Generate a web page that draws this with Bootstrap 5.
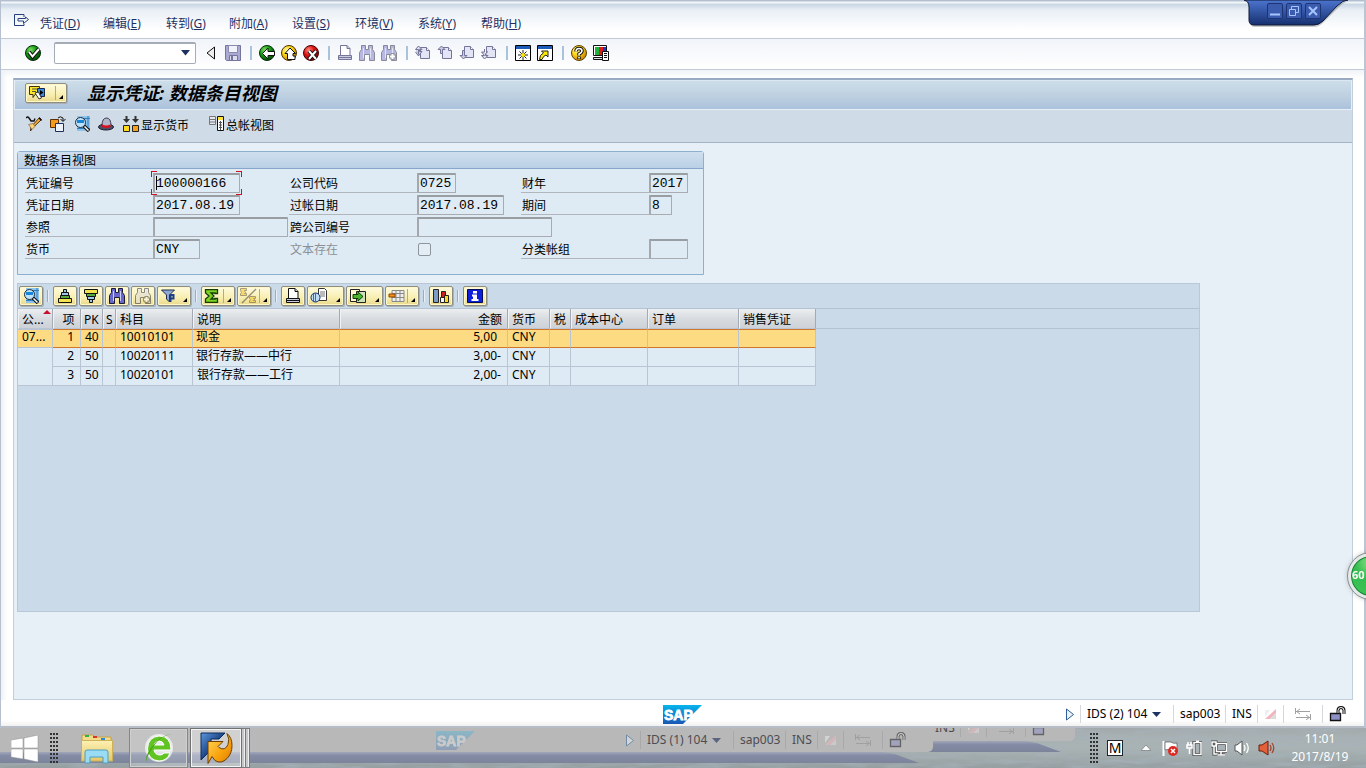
<!DOCTYPE html>
<html lang="zh-CN">
<head>
<meta charset="utf-8">
<meta name="viewport" content="width=device-width, initial-scale=1">
<title>显示凭证: 数据条目视图</title>
<link href="https://cdn.jsdelivr.net/npm/bootstrap@5.3.0/dist/css/bootstrap.min.css" rel="stylesheet">
<style>
  body{font-family:"Noto Sans","Noto Sans CJK SC",sans-serif;font-size:12px;line-height:16px;color:#000;background:#fff;min-height:100vh}
  svg{display:block;flex:none}
  button{font:inherit;color:inherit;border:0;background:none;padding:0}
  .sapwin{border-left:1px solid #b6c0ce;border-right:2px solid #bcc6d3;background:linear-gradient(90deg,#eef1f6,#fff 6px)}
  .menus{height:39px;padding:15px 0 0 12px;background:linear-gradient(#b4c0d2 0 1px,#f4f7fa 2px 3px,#c8d5e4 4px,#e9eff5 10px,#fff 30px);border-bottom:1px solid #c3cad6;color:#1d3263}
  .menus button{width:63px;height:17px;text-align:left}
  .menus .sysmenu{width:27px;margin-top:-3px}
  .stdbar{height:31px;padding:0 0 3px 21px;background:linear-gradient(#f1f4f9,#fff);border-bottom:1px solid #c3cad6}
  .ib{width:22px;height:22px;padding:3px}
  .vsep{width:12px;height:14px;background:linear-gradient(#a9c3dc,#a9c3dc) 6px 0/2px 14px no-repeat}
  .combo{width:142px;height:22px;margin-left:10px;border:1px solid #a5acb5;border-top-width:2px;border-radius:2px;background:#fff;position:relative}
  .combo input{border:0;outline:0;width:100%;height:100%;background:none;padding:0 20px 0 4px}
  .combo button{position:absolute;right:4px;top:6px}
  .gutter{padding:8px 11px 0 12px;background:linear-gradient(#eff2f7,#fff0 8px)}
  .frame{border:1px solid #c3cedb;border-top:2px solid #98abc3;background:#e8f0f7}
  .titlebar{height:30px;padding:0 10px 4px;border:1px solid #e6eff6;border-top-color:#dbe8f1;background:linear-gradient(#cddeea,#bfd1e1 50%,#abc2dc)}
  .titlebar h1{font-size:18px;line-height:24px;font-weight:700;font-style:italic;margin:0 0 0 20px}
  .ylw{border:1px solid #8c8d84;border-radius:2px;background:linear-gradient(#fffbdf,#f8eeb0 60%,#e9d98b);box-shadow:inset 0 0 0 1px #fff7c8,1px 1px 0 #a9b0b2}
  .apptools{height:33px;padding:0 0 4px 8px;border-bottom:1px solid #a3b6c8;background:#cfdce7}
  .apptools .ib{width:24px;padding:3px 4px}
  .workarea{padding:8px 2px 0 3px}
  .grpbox{width:687px;max-width:100%;border:1px solid #8fb0cc;border-radius:3px 3px 0 0;background:#dfebf4}
  .grpbox legend{float:left;width:100%;font-size:12px;line-height:17px;height:17px;padding-left:6px;margin:0;border-bottom:1px solid #88a5cc;background:linear-gradient(#cfdfef,#bad0e6)}
  .fgrid{clear:both;display:grid;grid-template-columns:128px 136px 128px 104px 128px 1fr;row-gap:2px;padding:4px 0 14px 7px}
  .fgrid label{border-bottom:1px solid #b0b6bc;padding:3px 0 0 1px;height:20px}
  .fgrid .dim{color:#8a9097;border:0}
  .fgrid input[type=text]{width:100%;height:20px;border:1px solid #a8acb0;border-top:2px solid #999ea3;border-left:2px solid #a4a8ac;border-radius:1px;background:#dfebf4;font:13px/15px "Liberation Mono",monospace;padding:0 0 0 1px;outline:0;display:block}
  .chk{appearance:none;width:13px;height:13px;border:1px solid #8e959b;border-radius:2px;background:#e2edf5;margin:4px 0 0 1px}
  .w23{width:23px}.w39{width:39px}.w47{width:47px}.w87{width:87px}.w135{width:135px}
  .focusbox{position:relative}
  .focusbox::after{content:"";position:absolute;inset:-2px;pointer-events:none;
    background:linear-gradient(#d41020,#d41020) 0 0/6px 1px,linear-gradient(#d41020,#d41020) 0 0/1px 6px,linear-gradient(#d41020,#d41020) 100% 0/6px 1px,linear-gradient(#d41020,#d41020) 100% 0/1px 6px,linear-gradient(#d41020,#d41020) 0 100%/6px 1px,linear-gradient(#d41020,#d41020) 0 100%/1px 6px,linear-gradient(#d41020,#d41020) 100% 100%/6px 1px,linear-gradient(#d41020,#d41020) 100% 100%/1px 6px;background-repeat:no-repeat}
  .caret{position:absolute;left:3px;top:3px;width:1px;height:14px;background:#000}
  .alv{margin:8px 150px 87px 0;border:1px solid #b9c8d9;background:#cbdae8}
  .alvtools{height:25px;padding:2px 0 3px 1px;gap:2px;border-bottom:1px solid #b4c3d3}
  .alvtools .ylw{width:24px;height:20px;display:flex;align-items:center;justify-content:center}
  .alvtools .drop{width:34px;justify-content:flex-start;padding-left:2px;gap:2px;position:relative}
  .alvtools .wide{width:37px}
  .drop::after{content:"";position:absolute;right:3px;bottom:3px;border:2px solid #000;border-top-color:transparent;border-left-color:transparent}
  .split::before{content:"";position:absolute;right:10px;top:2px;bottom:2px;width:1px;background:#b9ad74}
  .alvtools i{width:6px;height:12px;background:linear-gradient(90deg,#9eabba 1px,#e8eff6 1px) 2px 0/2px 12px no-repeat}
  .off{opacity:.5}
  .alvtable{border-collapse:separate;border-spacing:0;table-layout:fixed;width:798px;flex:none;line-height:15px}
  .alvtable th,.alvtable td{height:19px;padding:0 5px 3px 4px;border-right:1px solid #b9c5d3;border-bottom:1px solid #b9c5d3;overflow:hidden;white-space:nowrap;font-weight:400;background:#deebf4}
  .alvtable th{height:20px;background:linear-gradient(#eceeef,#d8dce1 50%,#cdd2d8);border-right-color:#a3aab3;border-left:1px solid #f0f2f4;position:relative;padding:3px 5px 1px 3px}
  .alvtable td:nth-child(-n+3){padding-left:4px;padding-right:3px}
  .alvtable td:nth-child(6){padding-left:3px}
  .alvtable th:nth-child(-n+4){padding-right:0}
  .alvtable .num{padding-right:6px!important;text-align:right}
  .alvtable .hot td{background:#fcdb82;border-top:1px solid #d2762c;border-bottom-color:#d2762c;line-height:14px}
  .alvtable .hot td:first-child{border-color:#b9c5d3}
  .sorted::after{content:"";position:absolute;right:1px;top:1px;border:4px solid transparent;border-top:0;border-bottom:4px solid #c8102e}
  .headrest{height:20px;border-bottom:1px solid #b4c3d3}
  .sbar{display:grid;grid-template-columns:1fr auto 1fr;align-items:center;height:28px}
  .cells{display:flex;justify-content:flex-end;align-items:center}
  .cells>*{flex:none;height:18px;display:flex;align-items:center;border-left:1px solid #d5d9de;padding-left:6px}
  .cells .c-go{width:15px;border:0;padding:0}
  .cells .c-sys{width:93px;gap:5px}
  .cells .c-host{width:52px}.cells .c-ins{width:32px}.cells .c-er{width:26px}
  .cells .c-tab{width:39px;padding-left:11px}.cells .c-lock{width:24px}
  .foot{padding:2px 18px 0;border-bottom:2px solid #b6bdc6;background:linear-gradient(#fff 20px,#f1f1f1)}
  .logo text{font:700 14px "Liberation Sans",sans-serif;fill:#fff;stroke:#fff;stroke-width:.8px}
  .taskbar{height:40px;position:relative;overflow:hidden;background:linear-gradient(#a3a9ab,#a8b1b3 25%,#aab3b3 50%,#959fa2)}
  .water{position:absolute;inset:0;width:100%;height:100%}
  .ghostwin{position:absolute;overflow:hidden}
  .ghostwin .pane{background:#b8b8b8;color:#4c4c52;border-bottom-right-radius:5px}
  .ghostwin .cells>*{border-color:#a9a9ab}
  .ghostwin .logo{opacity:.25}
  .ghostwin .edge{height:11px;background:linear-gradient(#a2a7b9,#858da6 30%,#7c849b);clip-path:polygon(0 0,calc(100% - 50px) 0,calc(100% - 38px) 2px,calc(100% - 14px) 11px,0 11px)}
  .g1{left:-23px;top:0;width:956px}
  .g1 .pane{height:24px;padding:0 27px}
  .g2{left:918px;top:-11px;width:157px}
  .g2 .pane{height:24px}
  .g2 .cells{padding:2px 26px 0 0}
  .tbitem{position:relative;height:40px;display:flex;align-items:center;justify-content:center}
  .tbwin{border:1px solid #868686;box-shadow:inset 0 0 0 1px #cfcfcf;background:#ffffff2e}
  .tbon{border:1px solid #6f7173;box-shadow:inset 0 0 0 1px #f4f4f4;background:#ffffff59}
  .stack{width:4px;height:40px;border:1px solid #77797b;border-left:0;box-shadow:inset -1px 0 0 #eee;background:#c4c6c8}
  .grip{width:8px;height:30px;background:radial-gradient(circle at 1px 1px,#333 1px,transparent 1px) 0 0/3px 4px}
  .ball{position:fixed;right:-28px;top:553px;width:46px;height:46px;border-radius:50%;border:3px solid #e5e9e8;outline:1px solid #8a9391;background:radial-gradient(circle at 50% 15%,#8fe08a,#35bd4f 40%,#3fc458);box-shadow:0 0 5px #5558,inset 0 0 0 1px #17823a;color:#fff;font-weight:700;font-size:11px;line-height:38px;padding-left:1px;z-index:5}
  .wintab{position:absolute;right:16px;top:0;width:104px;height:30px}
  .wintab>svg{position:absolute;inset:0}
  .wintab div{position:relative;display:flex;gap:3px;padding:3px 0 0 23px}
  .wintab button{width:16px;height:16px;border-radius:2px;border:1px solid #1c3474;background:#3b5cae}
  .clock{color:#fff;text-align:center;line-height:18px;width:66px}
</style>
</head>
<body class="d-flex flex-column">

<svg width="0" height="0" class="position-absolute" aria-hidden="true">
  <defs>
    <radialGradient id="gG" cx=".35" cy=".3" r=".7"><stop offset="0" stop-color="#7fdc60"/><stop offset=".5" stop-color="#159c16"/><stop offset="1" stop-color="#064d08"/></radialGradient>
    <radialGradient id="gY" cx=".35" cy=".3" r=".7"><stop offset="0" stop-color="#fff79a"/><stop offset=".5" stop-color="#fbd211"/><stop offset="1" stop-color="#c98500"/></radialGradient>
    <radialGradient id="gR" cx=".35" cy=".3" r=".7"><stop offset="0" stop-color="#ff8a7a"/><stop offset=".5" stop-color="#e01212"/><stop offset="1" stop-color="#7c0505"/></radialGradient>
    <linearGradient id="gS" x2="0" y2="1"><stop offset="0" stop-color="#05b5ee"/><stop offset="1" stop-color="#1b56b4"/></linearGradient>
    <linearGradient id="gTab" x2="0" y2="1"><stop offset="0" stop-color="#4c74cf"/><stop offset="1" stop-color="#16306f"/></linearGradient>
    <linearGradient id="gB" x2="1" y2="1"><stop offset="0" stop-color="#5d97dc"/><stop offset=".6" stop-color="#0f3577"/></linearGradient>
    <linearGradient id="gO" x2="1" y2="1"><stop offset="0" stop-color="#ffd95c"/><stop offset=".6" stop-color="#f8a10c"/><stop offset="1" stop-color="#d97a00"/></linearGradient>
    <linearGradient id="gF" x2="0" y2="1"><stop offset="0" stop-color="#fdf1b4"/><stop offset="1" stop-color="#e6c765"/></linearGradient>
  </defs>
  <symbol id="i-bino" viewBox="0 0 16 16"><path d="M2.500.500h4v4h3v-4h4v4l2 3v8h-5v-6h-5v6h-5v-8l2-3z" fill="currentColor" stroke="#1b1c30"/><path d="M4.500 3v10M11.500 3v10" stroke="#c9cdf3"/></symbol>
  <symbol id="i-print" viewBox="0 0 16 16"><path d="M3.500.500h6.500l3 3v7H3.500z" fill="#fff" stroke="currentColor"/><path d="M10 .500v3h3M1.500 10.500h13v4h-13z" fill="#c9cbe0" stroke="currentColor"/><path d="M2 12.500h12" stroke="currentColor"/></symbol>
  <symbol id="i-lens" viewBox="0 0 16 16"><path d="M3 0h13v15H3z" fill="#8fc3ea"/><path d="M3 2.500h13M3 12.500h13M14 0v15" stroke="#2f7fc0"/><circle cx="6.500" cy="6.500" r="5" fill="#bfe2fa" stroke="#1d2a3a"/><path d="M3 5.500h7" stroke="#1686d8" stroke-width="3"/><path d="M10 10l5 5" stroke="#111" stroke-width="3.500"/><path d="M10.500 10.500l4 4" stroke="#fff" stroke-width="1.500"/></symbol>
  <symbol id="i-page" viewBox="0 0 16 16"><path d="M5.500 3.500h6l3 3v8h-9z" fill="#e4e4f7" stroke="#75759a"/><path d="M11.500 3.500v3h3" fill="#fff" stroke="#75759a"/></symbol>
  <symbol id="i-play" viewBox="0 0 10 13"><path d="M1.500 1l7 5.500-7 5.500z" fill="#eaf3fa" stroke="#2c5f96"/></symbol>
  <symbol id="i-erase" viewBox="0 0 13 12"><path d="M1 2h5L1 9z" fill="#eee"/><path d="M1 11l11-10v4L6 11z" fill="#f0b6bd"/><path d="M6 11l6-6v6z" fill="#dcdcdc"/></symbol>
  <symbol id="i-tabs" viewBox="0 0 16 12"><path d="M.5 0v6M1 3.500h14M5 1L1.500 3.500 5 6M15.500 6v6M1 9.500h14M11 7l3.500 2.500L11 12" fill="none" stroke="#a0a0a0"/></symbol>
  <symbol id="i-lock" viewBox="0 0 17 16"><path d="M1.500 7.500h10v7h-10z" fill="#8c90c4" stroke="#111" stroke-width="1.300"/><path d="M9 7V4.500q0-3 3-3t3 3V8" fill="none" stroke="#111" stroke-width="3"/><path d="M9 7V4.500q0-3 3-3t3 3V8" fill="none" stroke="#fff"/></symbol>
</svg>

<div class="sapwin d-flex flex-column flex-grow-1 position-relative">
  <nav class="menus d-flex">
    <button class="sysmenu" aria-label="菜单"><svg width="17" height="13" viewBox="0 0 17 13"><path d="M11 3V.500H1.500v11H11V10M5 4.500h7.500v-1.500l3 2.500-5 4V7H5z" fill="none" stroke="#26407c"/></svg></button>
    <button>凭证(<u>D</u>)</button><button>编辑(<u>E</u>)</button><button>转到(<u>G</u>)</button><button>附加(<u>A</u>)</button><button>设置(<u>S</u>)</button><button>环境(<u>V</u>)</button><button>系统(<u>Y</u>)</button><button>帮助(<u>H</u>)</button>
  </nav>
  <div class="wintab">
    <svg width="104" height="30" viewBox="0 0 104 30"><path d="M0 1q6 1 6 8v13q0 5 5 5h59q5 0 10-5L95 7q5-5 9-5" fill="#0003"/><path d="M0 0q5 1 5 7v13q0 5 5 5h60q5 0 9-4L93 6q6-6 11-6z" fill="url(#gTab)" stroke="#0d1836"/></svg>
    <div>
      <button aria-label="最小化"><svg width="14" height="14"><path d="M2 10.500h10" stroke="#a8c4ff" stroke-width="2"/></svg></button>
      <button aria-label="还原"><svg width="14" height="14"><path d="M4.500 5V2.500h7v6H9M2.500 5.500h6v6h-6z" fill="none" stroke="#a8c4ff"/></svg></button>
      <button aria-label="关闭"><svg width="14" height="14"><path d="M3 3l8 8M11 3l-8 8" stroke="#a8c4ff" stroke-width="2"/></svg></button>
    </div>
  </div>

  <div class="stdbar d-flex align-items-center">
    <button class="ib" aria-label="确认"><svg width="16" height="16"><circle cx="8" cy="8" r="7.500" fill="url(#gG)" stroke="#052d06"/><path d="M4 7l3.500 4.500L14 4" fill="none" stroke="#111" stroke-width="4"/><path d="M4 7l3.500 4.500L14 4" fill="none" stroke="#fff" stroke-width="2"/></svg></button>
    <div class="combo"><input type="text" aria-label="命令"><button aria-label="展开"><svg width="11" height="6"><path d="M1 0h9L5.500 5.500z" fill="#1d3263"/></svg></button></div>
    <button class="ib ms-1" aria-label="收起"><svg width="16" height="16"><path d="M11.500 2v12L4 8z" fill="#eee" stroke="#111"/></svg></button>
    <button class="ib" aria-label="保存"><svg width="16" height="16"><path d="M.5.5h15v15h-14l-1-1z" fill="#a9a9d4" stroke="#75759a"/><path d="M3.500.5h9v7h-9z" fill="#f2f2fb" stroke="#8a8ab0"/><path d="M4.500 10.500h8v5h-8z" fill="#dcdcf0" stroke="#75759a"/><path d="M6 11h2v4H6z" fill="#75759a"/></svg></button>
    <span class="vsep"></span>
    <button class="ib" aria-label="返回"><svg width="16" height="16"><circle cx="8" cy="8" r="7.500" fill="url(#gG)" stroke="#052d06"/><path d="M3.500 8.500L9 3v3.500h6.500v4H9V14z" fill="#fff" stroke="#111"/></svg></button>
    <button class="ib" aria-label="退出"><svg width="16" height="16"><circle cx="8" cy="8" r="7.500" fill="url(#gY)" stroke="#4a3200"/><path d="M9 3l5.500 5.500H12V11h2v3.500H6.500V8.500H4z" fill="#fff" stroke="#111"/></svg></button>
    <button class="ib" aria-label="取消"><svg width="16" height="16"><circle cx="8" cy="8" r="7.500" fill="url(#gR)" stroke="#400"/><path d="M6 6l7 8M13 6l-7 8" stroke="#111" stroke-width="4"/><path d="M6 6l7 8M13 6l-7 8" stroke="#fff" stroke-width="2"/></svg></button>
    <span class="vsep"></span>
    <button class="ib" style="color:#75759a" aria-label="打印"><svg width="16" height="16"><use href="#i-print"/></svg></button>
    <button class="ib off" style="color:#77c" aria-label="查找"><svg width="16" height="16"><use href="#i-bino"/></svg></button>
    <button class="ib off" style="color:#77c" aria-label="查找下一个"><svg width="16" height="16"><use href="#i-bino"/><path d="M11.500 8v7M8 11.500h7" stroke="#334" stroke-width="4"/><path d="M11.500 9v5M9 11.500h5" stroke="#fff" stroke-width="2"/></svg></button>
    <span class="vsep"></span>
    <button class="ib" aria-label="首页"><svg width="16" height="16"><use href="#i-page" y="-1"/><path d="M3.500 1L7 4.500H4.500v2H7L3.500 11 .5 7M3.500 1L.5 4.500h3v5" fill="#ccd" stroke="#75759a"/></svg></button>
    <button class="ib" aria-label="上一页"><svg width="16" height="16"><use href="#i-page" y="-1"/><path d="M4.500 1L8 4.500H5.500v4h-2v-4H1z" fill="#ccd" stroke="#75759a"/></svg></button>
    <button class="ib" aria-label="下一页"><svg width="16" height="16"><use href="#i-page" y="-2"/><path d="M4.500 14L8 10.500H5.500v-5h-2v5H1z" fill="#ccd" stroke="#75759a"/></svg></button>
    <button class="ib" aria-label="末页"><svg width="16" height="16"><use href="#i-page" y="-2"/><path d="M3.500 14L7 10.500H4.500v-2L7 6.500M3.500 14L.5 10.500h3L.5 7h3V4" fill="#ccd" stroke="#75759a"/></svg></button>
    <span class="vsep"></span>
    <button class="ib" aria-label="新建会话"><svg width="16" height="16"><path d="M.5.5h15v15H.500z" fill="#fff" stroke="#000"/><path d="M1 1h14v3H1z" fill="#1c5bb8"/><path d="M8 5v10M3 10h10M4.500 6.500l7 7M11.500 6.500l-7 7" stroke="#222"/><circle cx="8" cy="10" r="2" fill="#ffe900"/></svg></button>
    <button class="ib" aria-label="快捷方式"><svg width="16" height="16"><path d="M.5.5h15v15H.500z" fill="#fff" stroke="#000"/><path d="M1 1h14v3H1z" fill="#1c5bb8"/><path d="M4.500 6H11v6L9 10q-3 1-4 4.500H2.500q0-5 4-6.500z" fill="#ffe900" stroke="#222"/></svg></button>
    <span class="vsep"></span>
    <button class="ib" aria-label="帮助"><svg width="16" height="16"><circle cx="8" cy="8" r="7.500" fill="url(#gY)" stroke="#5d4100"/><path d="M5 6.500Q5 3.500 8 3.500t3 2.500q0 1.500-3 3v1.500M8 11.500v2.500" fill="none" stroke="#111" stroke-width="3.500"/><path d="M5 6.500Q5 3.500 8 3.500t3 2.500q0 1.500-3 3v1.500M8 12v1.500" fill="none" stroke="#fff" stroke-width="1.600"/></svg></button>
    <button class="ib" aria-label="布局"><svg width="16" height="16"><path d="M.5.500h13v10H.500z" fill="#fff" stroke="#111"/><path d="M2 2h4v8H2z" fill="#1db33a"/><path d="M6 2h4v8H6z" fill="#e01a1a"/><path d="M10 2h3v8h-3z" fill="#1c3bc0"/><path d="M.5 12.500h9v2H.500z" fill="#ddd" stroke="#111"/><path d="M9.500 6.500h6v9h-6z" fill="#fff" stroke="#111"/><path d="M11 8.500h3M11 10.500h3M11 12.500h3" stroke="#111"/></svg></button>
  </div>

  <div class="gutter d-flex flex-column flex-grow-1">
    <main class="frame d-flex flex-column flex-grow-1">
      <header class="titlebar d-flex align-items-center">
        <button class="ylw drop split position-relative" style="width:42px;height:20px;padding-left:3px" aria-label="对象服务"><svg width="19" height="14"><path d="M.5.500h10v8H6l-2 3v-3H.500z" fill="#fde728" stroke="#3a3200"/><path d="M3 3h5M3 5.500h4" stroke="#554"/><path d="M8.500 2.500h7v8h-7z" fill="#3e8ad8" stroke="#16264d"/><path d="M11 4v5l3.500-2.500z" fill="#000"/><path d="M6 7l4 6 2.500-1-3-6z" fill="#fff" stroke="#333"/></svg></button>
        <h1>显示凭证: 数据条目视图</h1>
      </header>
      <div class="apptools d-flex align-items-center">
        <button class="ib" aria-label="更改"><svg width="16" height="16"><path d="M6 12.500L4.500 15 5 11l8.500-9.500 2 2z" fill="#f9b233" stroke="#4a2c10"/><path d="M2.500 8.500l4.500-1 2 3-3 3z" fill="#ffd37a" stroke="#653" stroke-width=".6"/><path d="M0 2q1.500-2 3 0t2 3h3l1-2.500M13 2l2.500 2.500" fill="none" stroke="#111" stroke-width="1.400"/></svg></button>
        <button class="ib" aria-label="其他凭证"><svg width="16" height="16"><path d="M.5 3.500h8v8h-8z" fill="#f59a1c" stroke="#5c3000"/><path d="M5.500 7.500h8v8h-8z" fill="#eef2fa" stroke="#1b2f5c"/><path d="M8 2q2-2.500 5 0v3M10.500 3l2.500 2.500L15.500 3" fill="none" stroke="#111"/></svg></button>
        <button class="ib" aria-label="选择凭证"><svg width="16" height="16"><use href="#i-lens"/></svg></button>
        <button class="ib" aria-label="抬头"><svg width="16" height="16"><ellipse cx="8" cy="11" rx="7.500" ry="3" fill="#4d5068" stroke="#1a1b2b"/><path d="M4 10q0-8 4.500-8T13 10q-4 2-9 0" fill="#b3b5cb" stroke="#3a3b50"/><path d="M4 8.500q4 2 8.500 0V11Q8 13 4 11z" fill="#d8121f"/></svg></button>
        <button class="d-flex align-items-center ms-1"><svg width="19" height="16"><path d="M4.500 0v5M13.500 0v5" stroke="#333" stroke-width="2"/><path d="M1 3h7L4.500 7zM10 3h7l-3.500 4z" fill="#333"/><path d="M1.500 9.500h6v6h-6z" fill="#ffd91f" stroke="#222"/><path d="M10.500 9.500h6v6h-6z" fill="#f5a11d" stroke="#222"/></svg><span class="pt-1">显示货币</span></button>
        <button class="d-flex align-items-center" style="margin-left:20px"><svg width="17" height="16"><path d="M.5.500h6v8h-6z" fill="#e3e6ef" stroke="#777"/><path d="M1 3.500h5M1 6h5" stroke="#777"/><path d="M8.500.5h6v14h-6z" fill="#fff" stroke="#111"/><path d="M9 1h5v3H9z" fill="#ffe23c"/><path d="M10 6.500h3M10 9h3M10 11.500h3M11.500 5v9" stroke="#555"/></svg><span class="pt-1">总帐视图</span></button>
      </div>

      <div class="workarea d-flex flex-column flex-grow-1">
        <fieldset class="grpbox">
          <legend>数据条目视图</legend>
          <div class="fgrid">
            <label for="f1">凭证编号</label><div><div class="focusbox w87"><input type="text" id="f1" value="100000166" readonly><span class="caret"></span></div></div>
            <label for="f2">公司代码</label><div><div class="w39"><input type="text" id="f2" value="0725" readonly></div></div>
            <label for="f3">财年</label><div><div class="w39"><input type="text" id="f3" value="2017" readonly></div></div>
            <label for="f4">凭证日期</label><div><div class="w87"><input type="text" id="f4" value="2017.08.19" readonly></div></div>
            <label for="f5">过帐日期</label><div><div class="w87"><input type="text" id="f5" value="2017.08.19" readonly></div></div>
            <label for="f6">期间</label><div><div class="w23"><input type="text" id="f6" value="8" readonly></div></div>
            <label for="f7">参照</label><div><div class="w135"><input type="text" id="f7" readonly></div></div>
            <label for="f8">跨公司编号</label><div style="grid-column:span 3"><div class="w135"><input type="text" id="f8" readonly></div></div>
            <label for="f9">货币</label><div><div class="w47"><input type="text" id="f9" value="CNY" readonly></div></div>
            <label for="f10" class="dim">文本存在</label><div><input type="checkbox" id="f10" class="chk" disabled></div>
            <label for="f11">分类帐组</label><div><div class="w39"><input type="text" id="f11" readonly></div></div>
          </div>
        </fieldset>

        <section class="alv flex-grow-1">
          <div class="alvtools d-flex align-items-center">
            <button class="ylw" aria-label="明细"><svg width="16" height="16"><use href="#i-lens"/></svg></button><i></i>
            <button class="ylw" aria-label="升序"><svg width="16" height="14"><path d="M6.500.5h3v3h-3zM4.500 3.500h7v3h-7z" fill="#9ec7f0" stroke="#111"/><path d="M3.500 6.500h9v3h-9z" fill="#56a83c" stroke="#111"/><path d="M1.500 9.500h13v4h-13z" fill="#f0e34d" stroke="#111"/></svg></button>
            <button class="ylw" aria-label="降序"><svg width="16" height="14"><path d="M1.500.5h13v4h-13z" fill="#f0e34d" stroke="#111"/><path d="M3.500 4.500h9v3h-9z" fill="#56a83c" stroke="#111"/><path d="M4.500 7.500h7v3h-7zM6.500 10.500h3v3h-3z" fill="#9ec7f0" stroke="#111"/></svg></button>
            <button class="ylw" style="color:#66c" aria-label="查找"><svg width="16" height="16"><use href="#i-bino"/></svg></button>
            <button class="ylw" style="color:#ddd" aria-label="查找下一个"><svg class="off" width="16" height="16"><use href="#i-bino"/><path d="M11.500 8v7M8 11.500h7" stroke="#333" stroke-width="4"/><path d="M11.500 9v5M9 11.500h5" stroke="#fff" stroke-width="2"/></svg></button>
            <button class="ylw drop" aria-label="过滤"><svg width="17" height="14"><path d="M1.500 1h13L9.500 6v7l-3-3V6z" fill="#8fa9d4" stroke="#222c44"/><path d="M10.500 13V6h3v3.500h-3" fill="none" stroke="#1c3f86" stroke-width="2"/></svg></button><i></i>
            <button class="ylw drop split" aria-label="合计"><svg width="18" height="14"><path d="M1.500.500h12v4H11V4H7l3 3-3 3h4v-.500h2.500v4h-12V10L5 7 1.500 4z" fill="#7ed321" stroke="#143c06" stroke-width="1.300"/></svg></button>
            <button class="ylw drop split" aria-label="小计"><svg class="off" width="20" height="16"><path d="M16 1L2 15" stroke="#333" stroke-width="1.500"/><path d="M.500.500h6v2h-2l1 2-1 1h2v2h-6V6l1-1.500-1-2zM9.500 8.500h6v2h-2l1 1-1 1h2v2h-6V13l1-1.500-1-1z" fill="#f7c11a" stroke="#543"/></svg></button><i></i>
            <button class="ylw" style="color:#111" aria-label="打印"><svg width="16" height="16"><use href="#i-print"/></svg></button>
            <button class="ylw drop wide" aria-label="视图"><svg width="18" height="16"><path d="M8.500.500h6l2 2v10h-8z" fill="#fff" stroke="#333"/><path d="M10 4h5M10 6h5M10 8h5" stroke="#777"/><circle cx="5.500" cy="9.500" r="4.500" fill="#bfdcf6" stroke="#15306e"/><path d="M5.500 5v9M3.500 6v7" stroke="#2b6fd0"/></svg></button>
            <button class="ylw drop wide" aria-label="导出"><svg width="18" height="16"><path d="M1.500 1.500h9v12h-9z" fill="#fff8d0" stroke="#222"/><path d="M7.500 3.500h9v11h-9z" fill="#cde2bb" stroke="#222"/><path d="M4 6.500h5V4l5 4.500L9 13v-2.500H4z" fill="#49b42c" stroke="#0f3d08"/></svg></button>
            <button class="ylw drop split" aria-label="布局"><svg width="17" height="14"><path d="M4 1.500h12v11H4zM4 4.500h12M4 8.500h12M8 1v12M12 1v12" fill="#eee" stroke="#888"/><path d="M1 5h6v3H1z" fill="#f5921e" stroke="#8a4300"/></svg></button><i></i>
            <button class="ylw" aria-label="图形"><svg width="18" height="16"><path d="M1.500 1.500h5v13h-5z" fill="#7c9cc8" stroke="#222"/><path d="M8.500 9.500h4v5h-4z" fill="#f7f7f7" stroke="#222"/><path d="M9.500 3.500h4v6h-4z" fill="#cf2020" stroke="#222"/><path d="M12.500 7.500h4v7h-4z" fill="#ffd91f" stroke="#222"/></svg></button><i></i>
            <button class="ylw" aria-label="信息"><svg width="16" height="14"><path d="M.5.5h15v13H.500z" fill="#0b20d8" stroke="#000a5c"/><path d="M6 2h4v2.500H6zM5 5.500h5V10h1.500v2h-7v-2H6V7.500H5z" fill="#fff"/></svg></button>
          </div>
          <div class="d-flex">
            <table class="alvtable">
              <colgroup><col style="width:35px"><col style="width:28px"><col style="width:22px"><col style="width:13px"><col style="width:77px"><col style="width:147px"><col style="width:168px"><col style="width:42px"><col style="width:21px"><col style="width:77px"><col style="width:91px"><col style="width:77px"></colgroup>
              <thead><tr><th class="sorted">公...</th><th class="text-center">项</th><th style="padding-left:2px">PK</th><th style="padding-left:2px">S</th><th>科目</th><th>说明</th><th class="text-end">金额</th><th>货币</th><th style="padding-right:2px">税</th><th>成本中心</th><th>订单</th><th>销售凭证</th></tr></thead>
              <tbody>
                <tr class="hot"><td>07...</td><td class="num">1</td><td>40</td><td></td><td>10010101</td><td>现金</td><td class="text-end" style="padding-right:10px">5,00</td><td>CNY</td><td></td><td></td><td></td><td></td></tr>
                <tr><td rowspan="2"></td><td class="num">2</td><td>50</td><td></td><td>10020111</td><td>银行存款——中行</td><td class="num">3,00-</td><td>CNY</td><td></td><td></td><td></td><td></td></tr>
                <tr><td class="num">3</td><td>50</td><td></td><td>10020101</td><td>银行存款——工行</td><td class="num">2,00-</td><td>CNY</td><td></td><td></td><td></td><td></td></tr>
              </tbody>
            </table>
            <div class="headrest flex-grow-1"></div>
          </div>
        </section>
      </div>
    </main>
  </div>
  <footer class="foot sbar">
    <span></span>
    <svg class="logo" width="39" height="19"><path d="M0 0h39L20 19H0z" fill="url(#gS)"/><text x="1" y="15">SAP</text></svg>
    <div class="cells"><span class="c-go"><svg width="10" height="13"><use href="#i-play"/></svg></span><span class="c-sys">IDS (2) 104<svg width="9" height="5"><path d="M0 0h9L4.500 5z" fill="#1d3263"/></svg></span><span class="c-host">sap003</span><span class="c-ins">INS</span><span class="c-er"><svg width="13" height="12"><use href="#i-erase"/></svg></span><span class="c-tab"><svg width="16" height="12"><use href="#i-tabs"/></svg></span><span class="c-lock"><svg width="17" height="16"><use href="#i-lock"/></svg></span></div>
  </footer>
</div>

<div class="taskbar">
  <svg class="water" aria-hidden="true"><filter id="wv" x="0" y="0" width="100%" height="100%"><feTurbulence type="fractalNoise" baseFrequency=".03 .22" numOctaves="3" seed="4"/><feColorMatrix values="0 0 0 0 .38  0 0 0 0 .45  0 0 0 0 .5  1.600 0 0 0 -.62"/></filter><rect width="100%" height="100%" filter="url(#wv)"/></svg>
  <div class="ghostwin g2" aria-hidden="true">
    <div class="pane"><div class="cells"><span class="c-ins">INS</span><span class="c-er"><svg width="13" height="12" class="off"><use href="#i-erase"/></svg></span><span class="c-tab"><svg width="16" height="12"><use href="#i-tabs"/></svg></span><span class="c-lock"><svg width="17" height="16" class="off"><use href="#i-lock"/></svg></span></div></div>
    <div class="edge"></div>
  </div>
  <div class="ghostwin g1" aria-hidden="true">
    <div class="pane sbar">
      <span></span><svg class="logo" width="39" height="19"><path d="M0 0h39L20 19H0z" fill="url(#gS)"/><text x="1" y="15">SAP</text></svg>
      <div class="cells"><span class="c-go"><svg class="off" width="10" height="13"><use href="#i-play"/></svg></span><span class="c-sys">IDS (1) 104<svg width="9" height="5"><path d="M0 0h9L4.500 5z" fill="#5c6480"/></svg></span><span class="c-host">sap003</span><span class="c-ins">INS</span><span class="c-er"><svg class="off" width="13" height="12"><use href="#i-erase"/></svg></span><span class="c-tab"><svg width="16" height="12"><use href="#i-tabs"/></svg></span><span class="c-lock"><svg class="off" width="17" height="16"><use href="#i-lock"/></svg></span></div>
    </div>
    <div class="edge"></div>
  </div>
  <div class="d-flex align-items-center position-relative">
    <button class="tbitem" style="width:50px" aria-label="开始"><svg width="28" height="27"><path d="M0 5l12-2v10H0zM13 3l14-3v13H13zM0 14h12v10L0 22zM13 14h14v13l-14-3z" fill="#fff" stroke="#8c8c8c" stroke-width=".5"/></svg></button>
    <span class="grip"></span>
    <button class="tbitem" style="width:78px" aria-label="资源管理器"><svg width="34" height="32"><path d="M2 7V3h11l2 2h16v4H2z" fill="#f2dc8c" stroke="#c2a24a"/><path d="M5 4h4" stroke="#2fb14c" stroke-width="2"/><path d="M13 5h4" stroke="#d43a2c" stroke-width="2"/><path d="M21 7h4" stroke="#2c8ad4" stroke-width="2"/><path d="M1.500 8.500h31V29h-31z" fill="url(#gF)" stroke="#cfb15a"/><path d="M5 31V20q0-2 2-2h19q2 0 2 2v11h-5v-6H10v6z" fill="#9bdcf5" stroke="#4a9fc6"/></svg></button>
    <button class="tbitem tbwin" style="width:59px;margin-left:-7px" aria-label="浏览器"><svg width="30" height="32" viewBox="0 0 30 32"><circle cx="15" cy="16" r="14" fill="#ffffffa8"/><path d="M27 18H10q1 5 6 5 3 0 4-2h6q-3 8-11 8Q4 28 3.500 17 4 5 15 4q12 0 12 14zM10 13h10q-1-4-5-4t-5 4z" fill="#62c422" stroke="#fff" fill-rule="evenodd"/><path d="M3 30Q0 26 7 16 17 2 28 2q-11 1-19 13T3 30z" fill="#43a417"/></svg></button>
    <button class="tbitem tbon" style="width:52px;margin-left:2px" aria-label="SAP Logon"><svg width="33" height="33" viewBox="0 0 33 33"><path d="M1 1h24l-6 6h-8v11L1 28z" fill="url(#gB)" stroke="#0d2a5c"/><path d="M8 9.500h15l-5 5 1 1q6 4 9-3 2-5-1-11 5 4 5 12 0 8-5 13-6 6-12 2l-3-4-4 7z" fill="url(#gO)" stroke="#6e3f00"/></svg></button>
    <span class="stack"></span><span class="stack"></span>
    <div class="d-flex align-items-center ms-auto" style="padding-right:13px">
      <span class="grip" style="margin-right:9px"></span>
      <span class="bg-white border border-dark d-flex align-items-center justify-content-center" style="width:16px;height:16px;margin-right:18px;font-size:14px">M</span>
      <svg width="10" height="6" style="margin-right:11px"><path d="M0 5.500L5 0l5 5.500z" fill="#fff" stroke="#666" stroke-width=".6"/></svg>
      <svg width="17" height="17" style="margin-right:7px"><path d="M1.500 1v15" stroke="#fff" stroke-width="2"/><path d="M3 2h6q2 2 6 1v7H9Q6 9 3 10z" fill="#fff" stroke="#555" stroke-width=".7"/><circle cx="11" cy="11" r="5" fill="#dc2a22"/><path d="M9 9l4 4M13 9l-4 4" stroke="#fff" stroke-width="1.500"/></svg>
      <svg width="16" height="16" style="margin-right:9px"><path d="M8 2.500h7v12H8zM10 1h3" fill="none" stroke="#444" stroke-width="3"/><path d="M8 2.500h7v12H8zM10 1h3M1 5h5v3H1zM2 2v3M5 2v3M3.500 8v6" fill="none" stroke="#fff" stroke-width="1.500"/></svg>
      <svg width="16" height="16" style="margin-right:7px"><path d="M5.500 3.500h10v8h-10zM10 12v3M7 15h7M1 2h4v4H1zM3 6v8h3" fill="none" stroke="#444" stroke-width="3"/><path d="M5.500 3.500h10v8h-10zM10 12v3M7 15h7M1 2h4v4H1zM3 6v8h3" fill="none" stroke="#fff" stroke-width="1.500"/></svg>
      <svg width="16" height="16" style="margin-right:8px"><path d="M1 5h2l5-4v14l-5-4H1z" fill="#fff" stroke="#555"/><path d="M10 5q2 3 0 6M12.500 3q3.500 5 0 10" fill="none" stroke="#fff" stroke-width="1.300"/></svg>
      <svg width="17" height="16" style="margin-right:12px"><path d="M1 5h3l6-4v14l-6-4H1z" fill="#e2603a" stroke="#6e1f0c"/><path d="M12 5q2 3 0 6M14 3q3.500 5 0 10" fill="none" stroke="#a8442c" stroke-width="1.300"/></svg>
      <div class="clock">11:01<br>2017/8/19</div>
    </div>
  </div>
</div>
<div class="ball">60</div>

<script src="https://cdn.jsdelivr.net/npm/bootstrap@5.3.0/dist/js/bootstrap.bundle.min.js"></script>
</body>
</html>
